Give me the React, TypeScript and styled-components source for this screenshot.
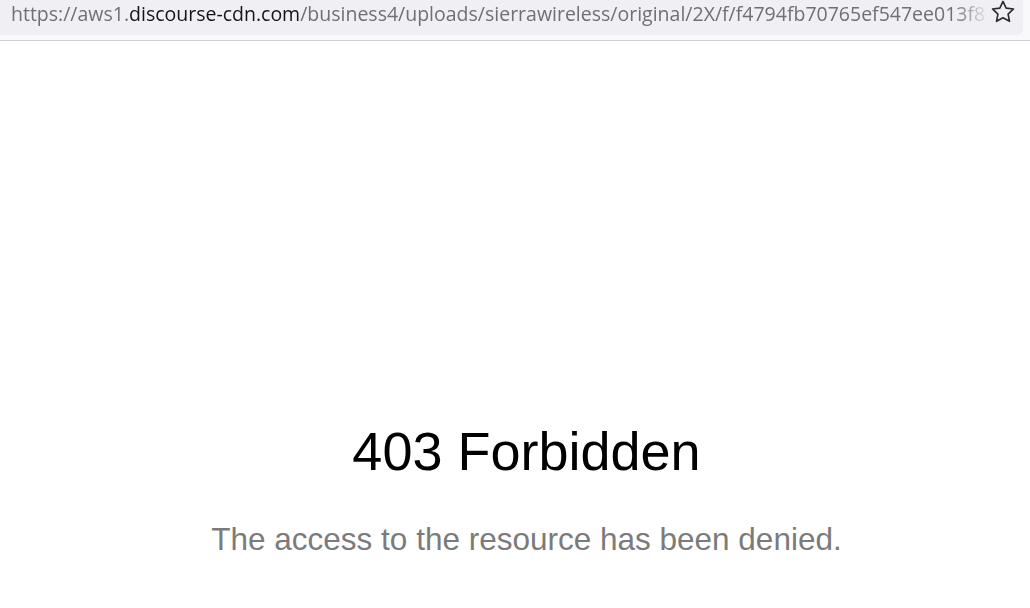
import React from "react";
import styled, { createGlobalStyle } from "styled-components";

const Global = createGlobalStyle`
  html, body { margin: 0; padding: 0; background: #ffffff; }
  body { width: 1030px; height: 608px; overflow: hidden; }
`;

const Page = styled.div`
  display: flex;
  flex-direction: column;
  width: 1030px;
  height: 608px;
`;

const Chrome = styled.header`
  display: flex;
  flex-direction: column;
  background: #f9f9fb;
  border-bottom: 1px solid #cfcfd4;
  height: 40px;
`;

const UrlBox = styled.div`
  display: flex;
  align-items: flex-start;
  width: 1023px;
  height: 35px;
  background: #f0f0f4;
  border-bottom-right-radius: 6px;
  box-sizing: border-box;
  padding-left: 11px;
  padding-right: 5px;
`;

const UrlText = styled.div`
  flex: 1;
  overflow: hidden;
  white-space: nowrap;
  font-family: "Open Sans", "Noto Sans", sans-serif;
  font-size: 19.5px;
  line-height: 27px;
  color: #6f6f74;
  -webkit-mask-image: linear-gradient(to right, #000 0, #000 calc(100% - 34px), rgba(0,0,0,0.05) 100%);
  mask-image: linear-gradient(to right, #000 0, #000 calc(100% - 34px), rgba(0,0,0,0.05) 100%);
`;

const Domain = styled.span`
  color: #15141a;
`;

const StarButton = styled.div`
  width: 30px;
  height: 24px;
  display: flex;
  align-items: center;
  justify-content: center;
  color: #2b2a33;
`;

const Main = styled.main`
  flex: 1;
  display: flex;
  flex-direction: column;
  align-items: center;
  padding-left: 23px;
  padding-top: 383px;
`;

const Title = styled.h1`
  margin: 0;
  font-family: "Liberation Sans", Arial, sans-serif;
  font-weight: 400;
  font-size: 54px;
  line-height: 54px;
  color: #000000;
`;

const Message = styled.p`
  margin: 46px 0 0;
  font-family: "Liberation Sans", Arial, sans-serif;
  font-size: 31.5px;
  line-height: 31.5px;
  color: #7b7b7b;
`;

const StarIcon = () => (
  <svg width="26" height="26" viewBox="0 0 24 24" fill="none" stroke="currentColor" strokeWidth="1.5" strokeLinejoin="round">
    <path d="M12 2.2l2.9 6.2 6.8.8-5 4.7 1.3 6.7L12 17.3l-6 3.3 1.3-6.7-5-4.7 6.8-.8z" />
  </svg>
);

export default function App() {
  return (
    <Page>
      <Global />
      <Chrome>
        <UrlBox>
          <UrlText>
            https://aws1.<Domain>discourse-cdn.com</Domain>/business4/uploads/sierrawireless/original/2X/f/f4794fb70765ef547ee013f8
          </UrlText>
          <StarButton>
            <StarIcon />
          </StarButton>
        </UrlBox>
      </Chrome>
      <Main>
        <Title>403 Forbidden</Title>
        <Message>The access to the resource has been denied.</Message>
      </Main>
    </Page>
  );
}
